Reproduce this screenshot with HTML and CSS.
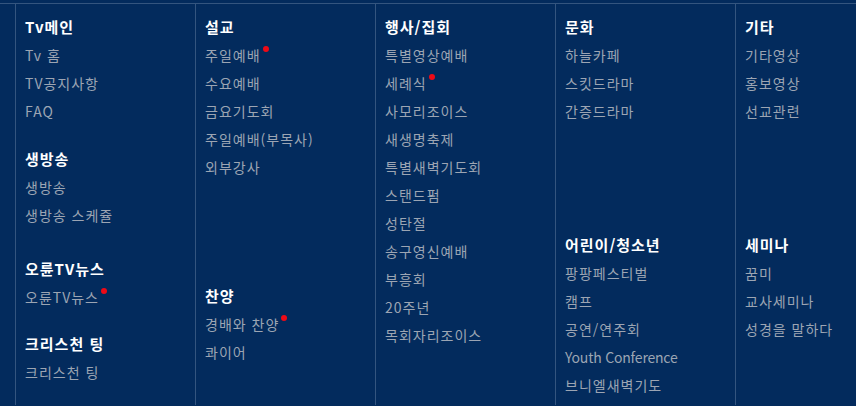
FILE: index.html
```html
<!DOCTYPE html>
<html lang="ko">
<head>
<meta charset="utf-8">
<link rel="stylesheet" href="styles.css">
</head>
<body>
<nav class="menu">
  <div class="col">
    <div class="group">
      <div class="head">Tv메인</div>
      <a class="item">Tv 홈</a>
      <a class="item">TV공지사항</a>
      <a class="item">FAQ</a>
    </div>
    <div class="group g-20">
      <div class="head">생방송</div>
      <a class="item">생방송</a>
      <a class="item">생방송 스케쥴</a>
    </div>
    <div class="group g-26">
      <div class="head">오륜TV뉴스</div>
      <a class="item">오륜TV뉴스<span class="dot"></span></a>
    </div>
    <div class="group g-19">
      <div class="head">크리스천 팅</div>
      <a class="item">크리스천 팅</a>
    </div>
  </div>
  <div class="col">
    <div class="group">
      <div class="head">설교</div>
      <a class="item">주일예배<span class="dot"></span></a>
      <a class="item">수요예배</a>
      <a class="item">금요기도회</a>
      <a class="item">주일예배(부목사)</a>
      <a class="item">외부강사</a>
    </div>
    <div class="group g-101">
      <div class="head">찬양</div>
      <a class="item">경배와 찬양<span class="dot"></span></a>
      <a class="item">콰이어</a>
    </div>
  </div>
  <div class="col">
    <div class="group">
      <div class="head">행사/집회</div>
      <a class="item">특별영상예배</a>
      <a class="item">세례식<span class="dot"></span></a>
      <a class="item">사모리조이스</a>
      <a class="item">새생명축제</a>
      <a class="item">특별새벽기도회</a>
      <a class="item">스탠드펌</a>
      <a class="item">성탄절</a>
      <a class="item">송구영신예배</a>
      <a class="item">부흥회</a>
      <a class="item">20주년</a>
      <a class="item">목회자리조이스</a>
    </div>
  </div>
  <div class="col">
    <div class="group">
      <div class="head">문화</div>
      <a class="item">하늘카페</a>
      <a class="item">스킷드라마</a>
      <a class="item">간증드라마</a>
    </div>
    <div class="group g-106">
      <div class="head">어린이/청소년</div>
      <a class="item">팡팡페스티벌</a>
      <a class="item">캠프</a>
      <a class="item">공연/연주회</a>
      <a class="item latin">Youth Conference</a>
      <a class="item">브니엘새벽기도</a>
    </div>
  </div>
  <div class="col">
    <div class="group">
      <div class="head">기타</div>
      <a class="item">기타영상</a>
      <a class="item">홍보영상</a>
      <a class="item">선교관련</a>
    </div>
    <div class="group g-106">
      <div class="head">세미나</div>
      <a class="item">꿈미</a>
      <a class="item">교사세미나</a>
      <a class="item">성경을 말하다</a>
    </div>
  </div>
</nav>
</body>
</html>
```
FILE: styles.css
```css
html, body {
  margin: 0;
  padding: 0;
  background: #032b5d;
  height: 100%;
  overflow: hidden;
}
body {
  font-family: "Noto Sans CJK KR", "Noto Sans", sans-serif;
}
.menu {
  margin-top: 3px;
  border-top: 1px solid #34557f;
  padding-left: 15px;
  display: flex;
  height: 402px;
  box-sizing: border-box;
}
.col {
  width: 180px;
  flex: 0 0 180px;
  border-left: 1px solid #34557f;
  padding: 9px 0 0 9px;
  box-sizing: border-box;
}
.col:last-child {
  flex: 1 1 auto;
}
.group {
  display: flex;
  flex-direction: column;
  align-items: flex-start;
}
.head {
  color: #ffffff;
  font-size: 15px;
  font-weight: 700;
  line-height: 28px;
  height: 28px;
  letter-spacing: 1px;
}
.item {
  color: #9ca5b3;
  font-size: 14px;
  line-height: 28px;
  height: 28px;
  text-decoration: none;
  white-space: nowrap;
  letter-spacing: 1px;
}
.item.latin {
  letter-spacing: -0.2px;
}
.dot {
  display: inline-block;
  width: 6px;
  height: 6px;
  border-radius: 50%;
  background: #ee0a16;
  margin-left: 2px;
  vertical-align: 9px;
}
.g-19 { margin-top: 19px; }
.g-20 { margin-top: 20px; }
.g-26 { margin-top: 26px; }
.g-101 { margin-top: 101px; }
.g-106 { margin-top: 106px; }
```
